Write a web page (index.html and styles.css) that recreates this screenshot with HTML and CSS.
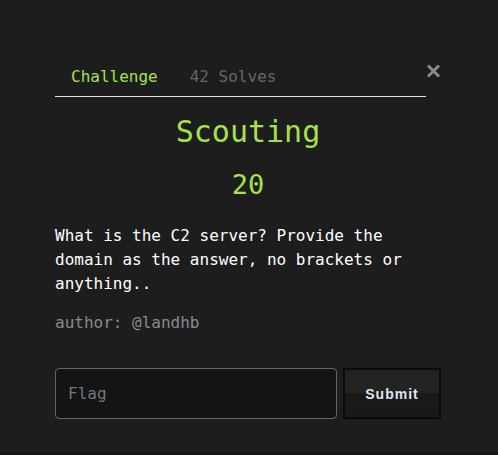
FILE: index.html
```html
<!DOCTYPE html>
<html>
<head>
<meta charset="utf-8">
<link rel="stylesheet" href="styles.css">
</head>
<body>
<div class="modal">
  <div class="header">
    <nav class="tabs">
      <span class="tab active">Challenge</span>
      <span class="tab">42 Solves</span>
    </nav>
    <button class="close" aria-label="Close">
      <svg width="15" height="14" viewBox="0 0 15 14"><path d="M2 1.5 L13 12.5 M13 1.5 L2 12.5" stroke="#8a8a8a" stroke-width="3" fill="none"/></svg>
    </button>
  </div>
  <h1 class="title">Scouting</h1>
  <div class="points">20</div>
  <p class="desc">What is the C2 server? Provide the domain as the answer, no brackets or anything..</p>
  <p class="author">author: @landhb</p>
  <form class="flag-row">
    <input class="flag" type="text" placeholder="Flag">
    <button class="submit" type="button">Submit</button>
  </form>
</div>
</body>
</html>
```
FILE: styles.css
```css
html, body {
  margin: 0;
  padding: 0;
  background: #141414;
}
body {
  font-family: "DejaVu Sans Mono", monospace;
  width: 498px;
  height: 455px;
  overflow: hidden;
}
.modal {
  box-sizing: border-box;
  width: 498px;
  height: 452px;
  background: #1d1d1d;
  padding: 56px 57px 0 55px;
}
.header {
  display: flex;
  align-items: flex-start;
}
.tabs {
  display: flex;
  width: 371px;
  border-bottom: 1px solid #e4e4e4;
}
.tab {
  font-size: 16px;
  line-height: 24px;
  padding: 9px 16px 7px;
  color: #666;
}
.tab.active {
  color: #a6e14a;
}
.close {
  margin-left: auto;
  margin-top: 8px;
  width: 15px;
  height: 14px;
  padding: 0;
  border: 0;
  background: none;
  display: block;
}
.close svg { display: block; }
.title {
  margin: 17px 0 0;
  text-align: center;
  font-size: 30px;
  line-height: 36px;
  font-weight: normal;
  color: #a6e14a;
}
.points {
  margin-top: 19px;
  text-align: center;
  font-size: 27px;
  line-height: 32px;
  color: #a6e14a;
}
.desc {
  margin: 23px 0 0;
  font-size: 16px;
  line-height: 24px;
  color: #ffffff;
}
.author {
  margin: 15px 0 0;
  font-size: 16px;
  line-height: 24px;
  color: #8a8a8a;
}
.flag-row {
  display: flex;
  gap: 6px;
  margin-top: 33px;
}
.flag {
  flex: 1;
  box-sizing: border-box;
  height: 51px;
  min-width: 0;
  border: 1px solid #666;
  border-radius: 4px;
  background: #141414;
  padding: 0 12px;
  font-family: "DejaVu Sans Mono", monospace;
  font-size: 16px;
  color: #ddd;
  outline: none;
}
.flag::placeholder {
  color: #6d7884;
}
.submit {
  box-sizing: border-box;
  width: 98px;
  height: 51px;
  border: 2px solid #0b0b0b;
  background: linear-gradient(#232323 0%, #232323 50%, #191919 50%, #181818 100%);
  color: #dfe6ee;
  font-family: "Liberation Sans", Arial, sans-serif;
  font-weight: bold;
  font-size: 14px;
  letter-spacing: 1px;
  padding: 0;
}
```
